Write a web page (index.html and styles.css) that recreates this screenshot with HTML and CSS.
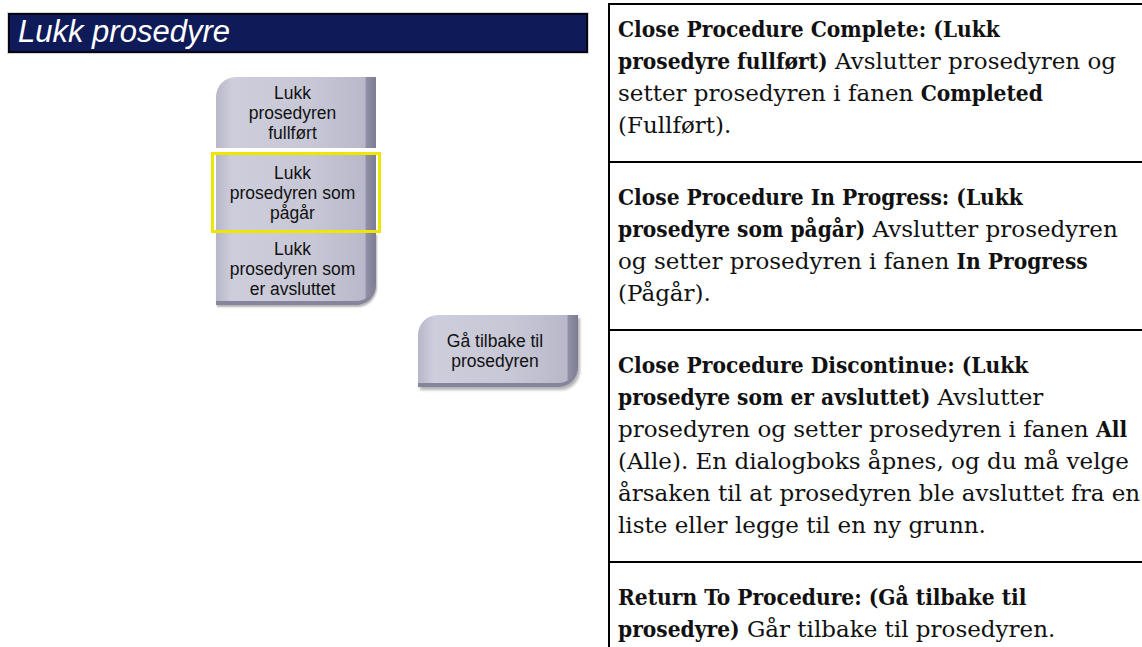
FILE: index.html
```html
<!DOCTYPE html>
<html>
<head>
    <meta charset="utf-8" />
    <title>Lukk prosedyre</title>
    <link rel="stylesheet" href="styles.css">
</head>
<body>
    <!--Screen capture-->
    <div class="screen">
        <div class="title">Lukk prosedyre</div>
        <div class="stack">
            <div class="btn first">Lukk<br>prosedyren<br>fullført</div>
            <div class="selected">
                <div class="btn">Lukk<br>prosedyren som<br>pågår</div>
            </div>
            <div class="btn last">Lukk<br>prosedyren som<br>er avsluttet</div>
        </div>
        <div class="btn back">Gå tilbake til<br>prosedyren</div>
    </div>
    <!--Descriptions-->
    <table class="info">
        <tbody>
            <tr>
                <td class="top"><b>Close Procedure Complete: (Lukk<br>prosedyre fullført)</b> Avslutter prosedyren og<br>setter prosedyren i fanen <b>Completed</b><br>(Fullført).</td>
            </tr>
            <tr>
                <td><b>Close Procedure In Progress: (Lukk<br>prosedyre som pågår)</b> Avslutter prosedyren<br>og setter prosedyren i fanen <b>In Progress</b><br>(Pågår).</td>
            </tr>
            <tr>
                <td><b>Close Procedure Discontinue: (Lukk<br>prosedyre som er avsluttet)</b> Avslutter<br>prosedyren og setter prosedyren i fanen <b>All</b><br>(Alle). En dialogboks åpnes, og du må velge<br>årsaken til at prosedyren ble avsluttet fra en<br>liste eller legge til en ny grunn.</td>
            </tr>
            <tr>
                <td><b>Return To Procedure: (Gå tilbake til<br>prosedyre)</b> Går tilbake til prosedyren.</td>
            </tr>
        </tbody>
    </table>
</body>
</html>
```

FILE: styles.css
```css
body {
    margin: 0;
    display: flex;
    align-items: flex-start;
    overflow: hidden;
    background: #fff;
}

.screen {
    width: 608px;
    flex: none;
    padding: 13px 0 0 8px;
    box-sizing: border-box;
    font-family: "Liberation Sans", Arial, sans-serif;
}

.title {
    width: 580px;
    height: 40px;
    box-sizing: border-box;
    background: #0f1b58;
    border: 2px solid #050514;
    outline: 1px solid #d4d4d4;
    color: #fff;
    font-size: 31px;
    font-style: italic;
    line-height: 34px;
    padding-left: 8px;
}

.stack {
    width: 171px;
    margin: 24px 0 0 202px;
    display: flex;
    flex-direction: column;
    align-items: center;
}

.btn {
    width: 160px;
    height: 71px;
    box-sizing: border-box;
    display: flex;
    align-items: center;
    justify-content: center;
    text-align: center;
    font-size: 17.5px;
    line-height: 20px;
    color: #111;
    padding-right: 6px;
    background: linear-gradient(90deg, #b7b7c9 0%, #cdcddb 10%, #c7c7d6 60%, #b8b8ca 93%, #8f8fa5 94%, #7c7c92 100%);
}

    .btn.first {
        border-top-left-radius: 20px;
        margin-bottom: 4px;
    }

    .btn.last {
        height: 72px;
        border-bottom-right-radius: 20px;
        box-shadow: inset 0 -4px 0 #85859b, 1px 2px 2px rgba(0, 0, 0, .3);
    }

.selected {
    border: 3px solid #ece600;
    padding: 0 2px;
}

    .selected .btn {
        height: 75px;
    }

.btn.back {
    height: 72px;
    margin: 10px 0 0 410px;
    border-radius: 20px 0 20px 0;
    box-shadow: inset 0 -4px 0 #85859b, 2px 3px 3px rgba(0, 0, 0, .3);
}

.info {
    margin-top: 3px;
    width: 560px;
    flex: none;
    border-collapse: collapse;
    border-spacing: 0;
    font-family: "DejaVu Serif", serif;
    font-size: 23px;
    line-height: 32px;
    color: #111;
}

    .info b {
        font-family: "DejaVu Serif Condensed", "DejaVu Serif", serif;
        font-size: 22.5px;
    }

    .info td {
        border: 2px solid #000;
        border-right: none;
        padding: 18px 8px 20px 8px;
        white-space: nowrap;
        vertical-align: top;
    }

        .info td.top {
            padding-top: 8px;
        }
```
